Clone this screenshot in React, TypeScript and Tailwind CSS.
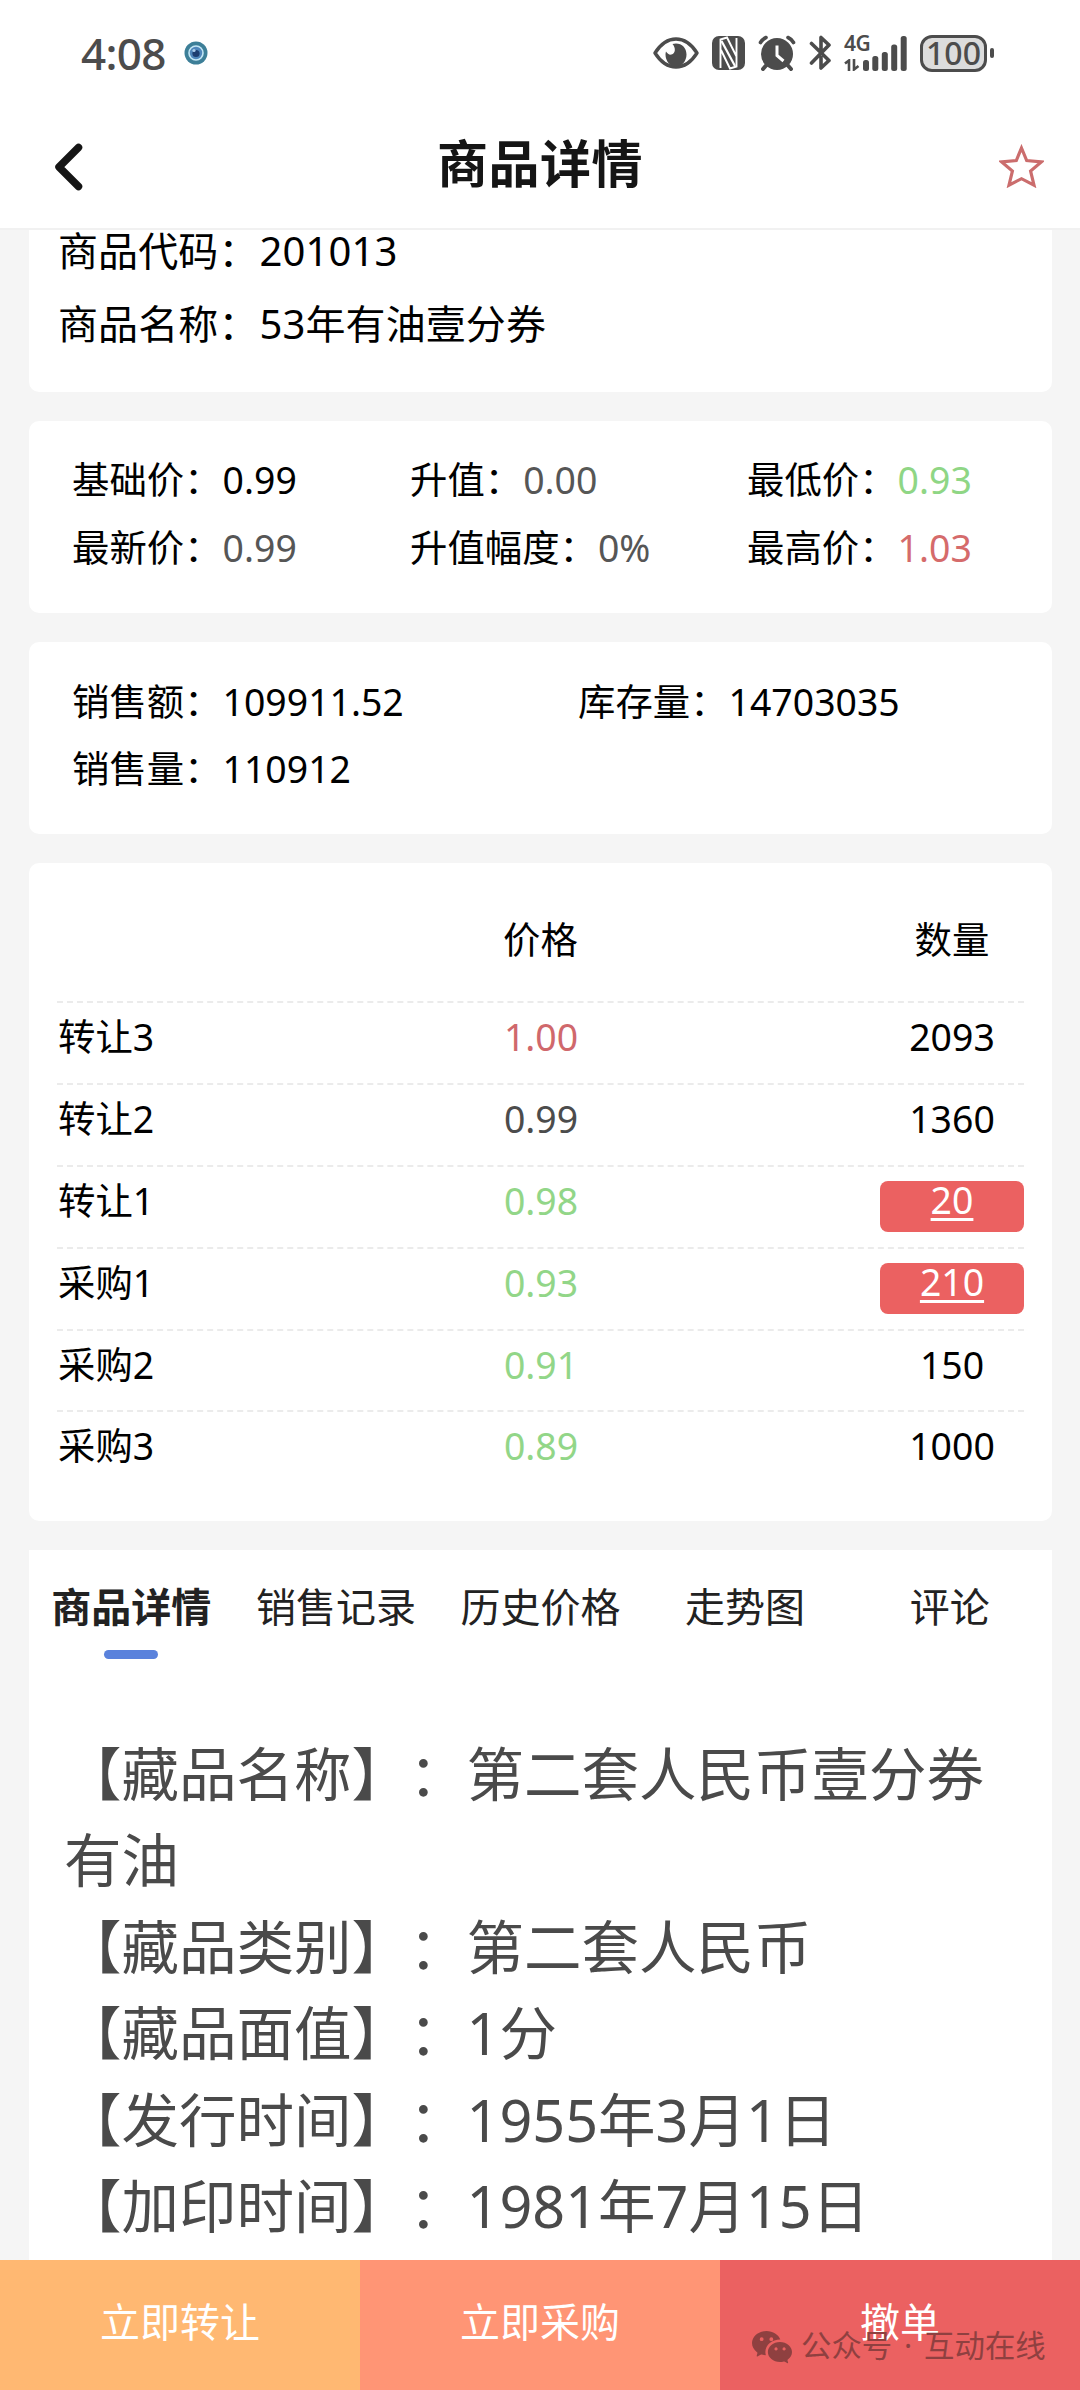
import { BsWechat } from 'react-icons/bs'

const prices = [
  { label: '基础价', value: '0.99', color: 'text-black' },
  { label: '升值', value: '0.00', color: 'text-[#565656]' },
  { label: '最低价', value: '0.93', color: 'text-[#8fd685]' },
  { label: '最新价', value: '0.99', color: 'text-[#565656]' },
  { label: '升值幅度', value: '0%', color: 'text-[#565656]' },
  { label: '最高价', value: '1.03', color: 'text-[#d56b6b]' },
]

const orders = [
  { label: '转让3', price: '1.00', color: 'text-[#d0686c]', amount: '2093' },
  { label: '转让2', price: '0.99', color: 'text-[#4c4c4c]', amount: '1360' },
  { label: '转让1', price: '0.98', color: 'text-[#92d688]', amount: '20', mine: true },
  { label: '采购1', price: '0.93', color: 'text-[#92d688]', amount: '210', mine: true },
  { label: '采购2', price: '0.91', color: 'text-[#92d688]', amount: '150' },
  { label: '采购3', price: '0.89', color: 'text-[#92d688]', amount: '1000' },
]

const tabs = ['商品详情', '销售记录', '历史价格', '走势图', '评论']

const details = [
  '【藏品名称】：第二套人民币壹分券有油',
  '【藏品类别】：第二套人民币',
  '【藏品面值】：1分',
  '【发行时间】：1955年3月1日',
  '【加印时间】：1981年7月15日',
]

const StatusBar = () => {
  return (
    <div className="flex h-[106px] items-center pl-[81px] pr-[85px] text-[#4c4c4c]">
      <span className="text-[44px] leading-none font-medium tracking-[-0.700px]">4:08</span>
      <svg className="ml-[18px]" width="24" height="24" viewBox="0 0 24 24">
        <circle cx="12" cy="12" r="11.5" fill="#3d7f98" />
        <circle cx="12" cy="12" r="7" fill="#4f86bb" stroke="#c3e6f5" strokeWidth="1.6" />
        <circle cx="12" cy="12.5" r="3.6" fill="#1d3d70" />
        <circle cx="10" cy="9.5" r="1.6" fill="#a9cbea" />
      </svg>

      <div className="ml-auto flex items-center">
        {/* eye */}
        <svg width="46" height="32" viewBox="0 0 46 32" fill="none">
          <path d="M2 16C8 6.500 15 2 23 2s15 4.500 21 14c-6 9.500-13 14-21 14S8 25.500 2 16z" stroke="currentColor" strokeWidth="3.400" strokeLinejoin="round" />
          <path d="M23 6.500c6 0 10.500 4.500 10.500 11S29 29.500 23 29.500 12.500 24 12.500 17.500c0-1 .2-2 .5-3 1.500 2.500 3.500 3.500 5.500 3 4-1 4.500-6.500 1-10.500 1-.3 2.300-.5 3.500-.5z" fill="currentColor" />
        </svg>
        {/* nfc */}
        <svg className="ml-[13px]" width="33" height="34" viewBox="0 0 33 34">
          <rect width="33" height="34" rx="7" fill="currentColor" />
          <path d="M8.500 32V3.500L15 1.500l9.500 19M24.500 2v28.500l-6.500 2L9 14" fill="none" stroke="#fff" strokeWidth="1.900" />
          <path d="M9.500 5L23 30" fill="none" stroke="#fff" strokeWidth="2.200" />
        </svg>
        {/* alarm */}
        <svg className="ml-[13px]" width="38" height="36" viewBox="0 0 38 36" fill="none">
          <circle cx="19" cy="19" r="16" fill="currentColor" />
          <path d="M8.500 30L5 34M29.500 30l3.500 4" stroke="currentColor" strokeWidth="4" strokeLinecap="round" />
          <path d="M2.500 7.500q2-3.500 5.500-5M35.500 7.500q-2-3.500-5.500-5" stroke="currentColor" strokeWidth="3.600" strokeLinecap="round" />
          <path d="M19 10.500v10l6.500 5.500" stroke="#fff" strokeWidth="3" />
        </svg>
        {/* bluetooth */}
        <svg className="ml-[13px]" width="23" height="36" viewBox="0 0 23 36" fill="none">
          <path d="M2.500 8.500L20 25.500l-8 7.500V22.500M2.500 28L20 10 12 2.500V14" stroke="currentColor" strokeWidth="3.600" strokeLinecap="round" strokeLinejoin="round" />
        </svg>
        {/* signal */}
        <div className="ml-[12px] flex h-9 items-end">
          <div className="flex h-full w-[18px] flex-col justify-between">
            <span className="text-[21px] leading-[17px] font-semibold tracking-[-0.500px]">4G</span>
            <svg width="16" height="12" viewBox="0 0 16 12" fill="none" stroke="currentColor" strokeWidth="2.600">
              <path d="M1 4.500L5 1.500V12M10 0v10.500l4.500-3.500" />
            </svg>
          </div>
          <svg className="ml-[1px]" width="44" height="35" viewBox="0 0 44 35" fill="currentColor">
            <rect x="0" y="24" width="6" height="11" rx="2.500" />
            <rect x="9.300" y="20" width="6" height="15" rx="2.500" />
            <rect x="18.800" y="16" width="6" height="19" rx="2.500" />
            <rect x="28.200" y="8.500" width="6" height="26.500" rx="2.500" />
            <rect x="37.700" y="0" width="6" height="35" rx="2.500" />
          </svg>
        </div>
        {/* battery */}
        <div className="ml-[13px] flex h-[37px] w-[67px] items-center justify-center rounded-xl border-3 border-[#4c4c4c] bg-[#dcdcdc] text-[32px] leading-none font-medium">
          <span>100</span>
        </div>
        <div className="mr-[1px] ml-[3px] h-[10px] w-[4px] rounded-sm bg-[#4c4c4c]" />
      </div>
    </div>
  )
}

const NavBar = () => {
  return (
    <div className="flex h-[122px] items-center pr-[36px] pl-[54px]">
      <svg width="29" height="48" viewBox="0 0 29 48" fill="none">
        <path d="M24.500 4.500L5 24l19.500 19.500" stroke="#151515" strokeWidth="7.500" strokeLinecap="round" strokeLinejoin="round" />
      </svg>
      <h1 className="mr-[2px] mb-[7px] flex-1 text-center text-[51px] leading-none font-semibold tracking-[0.500px] text-[#151515]">
        商品详情
      </h1>
      <svg className="mb-[2px]" width="45" height="44" viewBox="0 0 45 44" fill="none">
        <path d="M22.500 4l5.200 12.500 14.800 1.300-10.900 9.200 3.400 14.200-12.500-6.500L10 41.200l3.400-14.200-10.900-9.200 14.800-1.300z" stroke="#cb6d6d" strokeWidth="3.200" />
      </svg>
    </div>
  )
}

const App = () => {
  return (
    <div className="flex h-[2390px] w-[1080px] flex-col overflow-hidden bg-[#f5f5f5] text-black [font-family:'Noto_Sans','Noto_Sans_CJK_SC',sans-serif] [text-spacing-trim:space-all]">
      <header className="h-[230px] shrink-0 border-b-2 border-[#f1f1f1] bg-white">
        <StatusBar />
        <NavBar />
      </header>

      <main className="flex min-h-0 flex-1 flex-col gap-[29px] pr-[28px] pl-[29px]">
        <section className="h-[162px] shrink-0 rounded-b-[10px] bg-white px-[29px] text-[40px] leading-[73px] tracking-[0.100px]">
          <p className="leading-[41px]">商品代码：<span className="ml-[1px]">201013</span></p>
          <p className="mt-[16px]">商品名称：<span className="ml-[1px]">53年有油壹分券</span></p>
        </section>

        <section className="grid h-[192px] shrink-0 grid-cols-[338px_337px_1fr] content-start rounded-[10px] bg-white pt-[25px] pl-[43px] text-[37.400px] leading-[68px]">
          {prices.map((item) => (
            <p key={item.label} className="whitespace-nowrap">
              {item.label}：<span className={`ml-px ${item.color}`}>{item.value}</span>
            </p>
          ))}
        </section>

        <section className="grid h-[192px] shrink-0 grid-cols-2 content-start rounded-[10px] bg-white pt-[26px] pl-[43px] text-[37.400px] leading-[67px]">
          <p>销售额：<span className="ml-px">109911.52</span></p>
          <p className="pl-[16px]">库存量：<span className="ml-px">14703035</span></p>
          <p>销售量：<span className="ml-px">110912</span></p>
        </section>

        <section className="h-[658px] shrink-0 rounded-[10px] bg-white px-[28px] pt-[36px] text-[37.400px]">
          <div className="flex h-[102px] justify-between text-center leading-[82px]">
            <span className="w-[144px]" />
            <span className="w-[144px]">价格</span>
            <span className="w-[144px]">数量</span>
          </div>
          {orders.map((order) => (
            <div key={order.label} className="flex h-[81.900px] justify-between border-t-2 border-dashed border-[#ebebeb] leading-[67px]">
              <span className="w-[144px] pl-px">{order.label}</span>
              <span className={`w-[144px] pl-px text-center ${order.color}`}>{order.price}</span>
              {order.mine ? (
                <span className="mt-[14px] h-[51px] w-[144px] rounded-[8px] bg-[#eb6161] text-center leading-[38px] text-white underline decoration-3 underline-offset-[4px]">
                  {order.amount}
                </span>
              ) : (
                <span className="w-[144px] text-center">{order.amount}</span>
              )}
            </div>
          ))}
        </section>

        <section className="min-h-0 flex-1 bg-white">
          <nav className="flex text-center text-[40px] text-[#222]">
            {tabs.map((tab, i) => (
              <div key={tab} className="flex flex-1 flex-col items-center">
                <span className={`mt-[22px] leading-[70px] ${i === 0 ? 'font-semibold' : ''}`}>{tab}</span>
                {i === 0 && <i className="mt-[8px] h-[9px] w-[54px] rounded-full bg-[#5a82dc]" />}
              </div>
            ))}
          </nav>
          <div className="mt-[72px] pr-[29px] pl-[35px] text-[57.500px] leading-[86.400px] text-[#4a4a4a]">
            {details.map((line) => (
              <p key={line}>{line}</p>
            ))}
          </div>
        </section>
      </main>

      <footer className="relative grid h-[130px] shrink-0 grid-cols-3 text-center text-[40px] text-white">
        <button className="bg-[#ffb872] pb-[7px]">立即转让</button>
        <button className="bg-[#ff9575] pb-[7px]">立即采购</button>
        <button className="bg-[#eb6161] pb-[7px]">撤单</button>
        <div className="absolute top-[66px] left-[752px] flex items-center gap-[9px] text-[30.400px] leading-[40px] text-[#8f4040]">
          <BsWechat size={40} />
          <span className="whitespace-nowrap [word-spacing:4px]">公众号 · 互动在线</span>
        </div>
      </footer>
    </div>
  )
}

export default App
